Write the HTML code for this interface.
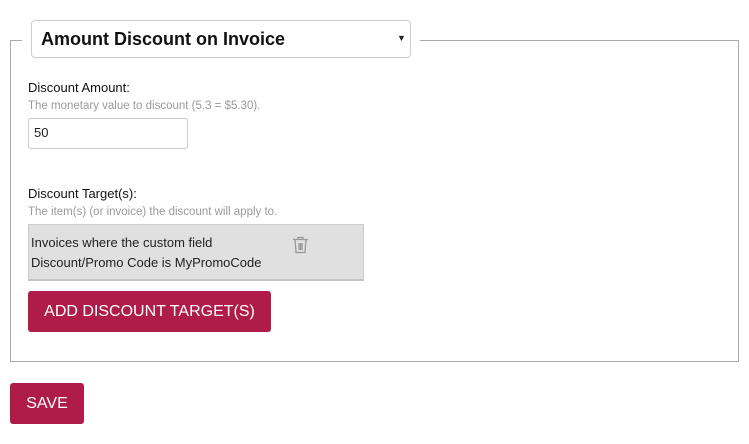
<!DOCTYPE html><html><head><style>
body{margin:0;width:749px;height:444px;background:#fff;font-family:"Liberation Sans",sans-serif;position:relative;overflow:hidden}
.a{position:absolute}
</style></head><body>
<div class="a" style="left:10px;top:40px;width:727px;height:320px;border:1px solid #aaa"></div>
<div class="a" style="left:22px;top:30px;width:398px;height:20px;background:#fff"></div>
<div class="a" style="left:31px;top:20px;width:378px;height:36px;border:1px solid #ccc;border-radius:4px;background:#fff"></div>
<div class="a" style="left:41px;top:29px;font-size:18px;font-weight:bold;color:#111">Amount Discount on Invoice</div>
<div class="a" style="left:397px;top:33px;font-size:9px;color:#222">▼</div>
<div class="a" style="left:28px;top:80px;font-size:13px;color:#111">Discount Amount:</div>
<div class="a" style="left:28px;top:100px;font-size:11.5px;color:#999">The monetary value to discount (5.3 = $5.30).</div>
<div class="a" style="left:28px;top:118px;width:158px;height:29px;border:1px solid #ccc;border-radius:3px"></div>
<div class="a" style="left:34px;top:125px;font-size:13px;color:#222">50</div>
<div class="a" style="left:28px;top:186px;font-size:13px;color:#111">Discount Target(s):</div>
<div class="a" style="left:28px;top:206px;font-size:11.5px;color:#999">The item(s) (or invoice) the discount will apply to.</div>
<div class="a" style="left:28px;top:224px;width:334px;height:54px;background:#e0e0e0;border:1px solid #ccc;border-bottom:2px solid #c4c4c4"></div>
<div class="a" style="left:31px;top:233px;font-size:13px;color:#222;line-height:20px">Invoices where the custom field<br>Discount/Promo Code is MyPromoCode</div>
<svg class="a" style="left:292px;top:236px" width="17" height="18" viewBox="0 0 17 18" fill="none" stroke="#999" stroke-width="1.3"><path d="M1 3.5h15M6 3.5V1.5h5v2M3 3.5l1 13h9l1-13M7 7v7M8.5 7v7M10 7v7"/></svg>
<div class="a" style="left:28px;top:291px;width:243px;height:41px;background:#b01c4a;border-radius:3px;color:#fff;font-size:16px;line-height:41px;text-align:center">ADD DISCOUNT TARGET(S)</div>
<div class="a" style="left:10px;top:383px;width:74px;height:41px;background:#b01c4a;border-radius:3px;color:#fff;font-size:16px;line-height:41px;text-align:center">SAVE</div>
</body></html>
